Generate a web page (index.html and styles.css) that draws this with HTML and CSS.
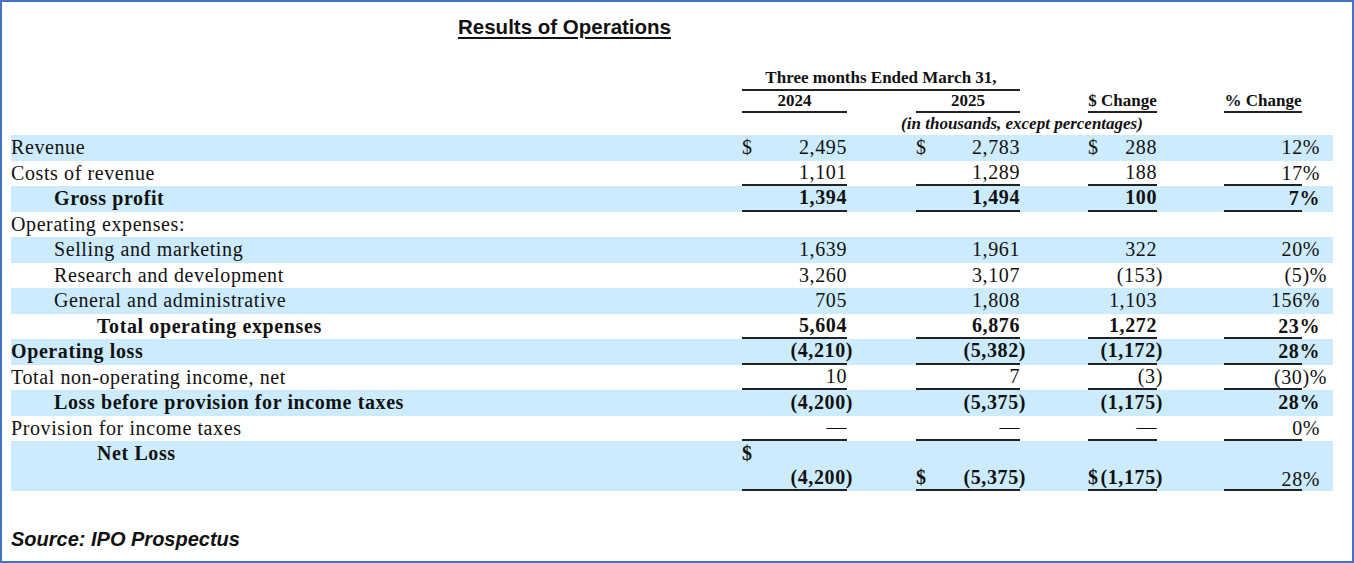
FILE: index.html
```html
<!DOCTYPE html>
<html lang="en">
<head>
<meta charset="utf-8">
<title>Results of Operations</title>
<link rel="stylesheet" href="styles.css">
</head>
<body>
<div class="frame">
  <h1 class="title">Results of Operations</h1>

  <div class="head">
    <div class="grid hrow h1r">
      <div class="span3 ul">Three months Ended March 31,</div>
    </div>
    <div class="grid hrow h2r">
      <div class="c1 ul ctr">2024</div>
      <div class="c2 ul ctr">2025</div>
      <div class="c3 ul ctr">$ Change</div>
      <div class="c4 ul ctr pcth">% Change</div>
    </div>
    <div class="grid hrow h3r">
      <div class="spanall ctr ital">(in thousands, except percentages)</div>
    </div>
  </div>

  <div class="body">
    <div class="grid row blue">
      <div class="lbl">Revenue</div>
      <div class="m c1"><span>$</span><span>2,495</span></div>
      <div class="m c2"><span>$</span><span>2,783</span></div>
      <div class="m c3"><span>$</span><span>288</span></div>
      <div class="pct c4"><span>12%</span></div>
    </div>
    <div class="grid row line">
      <div class="lbl">Costs of revenue</div>
      <div class="m c1"><span></span><span>1,101</span></div>
      <div class="m c2"><span></span><span>1,289</span></div>
      <div class="m c3"><span></span><span>188</span></div>
      <div class="pct c4"><span>17%</span></div>
    </div>
    <div class="grid row blue line bold">
      <div class="lbl i1">Gross profit</div>
      <div class="m c1"><span></span><span>1,394</span></div>
      <div class="m c2"><span></span><span>1,494</span></div>
      <div class="m c3"><span></span><span>100</span></div>
      <div class="pct c4"><span>7%</span></div>
    </div>
    <div class="grid row">
      <div class="lbl">Operating expenses:</div>
    </div>
    <div class="grid row blue">
      <div class="lbl i1">Selling and marketing</div>
      <div class="m c1"><span></span><span>1,639</span></div>
      <div class="m c2"><span></span><span>1,961</span></div>
      <div class="m c3"><span></span><span>322</span></div>
      <div class="pct c4"><span>20%</span></div>
    </div>
    <div class="grid row">
      <div class="lbl i1">Research and development</div>
      <div class="m c1"><span></span><span>3,260</span></div>
      <div class="m c2"><span></span><span>3,107</span></div>
      <div class="m c3"><span></span><span>(153<span class="hang">)</span></span></div>
      <div class="pct c4"><span>(5<span class="hangp">)%</span></span></div>
    </div>
    <div class="grid row blue">
      <div class="lbl i1">General and administrative</div>
      <div class="m c1"><span></span><span>705</span></div>
      <div class="m c2"><span></span><span>1,808</span></div>
      <div class="m c3"><span></span><span>1,103</span></div>
      <div class="pct c4"><span>156%</span></div>
    </div>
    <div class="grid row line bold">
      <div class="lbl i2">Total operating expenses</div>
      <div class="m c1"><span></span><span>5,604</span></div>
      <div class="m c2"><span></span><span>6,876</span></div>
      <div class="m c3"><span></span><span>1,272</span></div>
      <div class="pct c4"><span>23%</span></div>
    </div>
    <div class="grid row blue line bold">
      <div class="lbl">Operating loss</div>
      <div class="m c1"><span></span><span>(4,210<span class="hang">)</span></span></div>
      <div class="m c2"><span></span><span>(5,382<span class="hang">)</span></span></div>
      <div class="m c3"><span></span><span>(1,172<span class="hang">)</span></span></div>
      <div class="pct c4"><span>28%</span></div>
    </div>
    <div class="grid row line">
      <div class="lbl">Total non-operating income, net</div>
      <div class="m c1"><span></span><span>10</span></div>
      <div class="m c2"><span></span><span>7</span></div>
      <div class="m c3"><span></span><span>(3<span class="hang">)</span></span></div>
      <div class="pct c4"><span>(30<span class="hangp">)%</span></span></div>
    </div>
    <div class="grid row blue bold">
      <div class="lbl i1">Loss before provision for income taxes</div>
      <div class="m c1"><span></span><span>(4,200<span class="hang">)</span></span></div>
      <div class="m c2"><span></span><span>(5,375<span class="hang">)</span></span></div>
      <div class="m c3"><span></span><span>(1,175<span class="hang">)</span></span></div>
      <div class="pct c4"><span>28%</span></div>
    </div>
    <div class="grid row line">
      <div class="lbl">Provision for income taxes</div>
      <div class="m c1"><span></span><span>—</span></div>
      <div class="m c2"><span></span><span>—</span></div>
      <div class="m c3"><span></span><span>—</span></div>
      <div class="pct c4"><span>0%</span></div>
    </div>
    <div class="grid row blue line bold tall">
      <div class="lbl i2">Net Loss</div>
      <div class="m c1 two"><span class="top">$</span><span>(4,200<span class="hang">)</span></span></div>
      <div class="m c2"><span>$</span><span>(5,375<span class="hang">)</span></span></div>
      <div class="m c3"><span>$</span><span>(1,175<span class="hang">)</span></span></div>
      <div class="pct c4 reg"><span>28%</span></div>
    </div>
  </div>

  <p class="source">Source: IPO Prospectus</p>
</div>
</body>
</html>
```

FILE: styles.css
```css
* {
  box-sizing: border-box;
}

html,
body {
  margin: 0;
  padding: 0;
  background: #ffffff;
}

.frame {
  width: 1354px;
  height: 563px;
  border: 2px solid #4472c4;
  padding: 13px 0 0 9px;
  font-family: "Liberation Serif", "Times New Roman", serif;
  color: #111111;
  overflow: hidden;
}

.title {
  margin: 0 0 0 447px;
  height: 24px;
  font-family: "Liberation Sans", Arial, sans-serif;
  font-weight: 700;
  font-size: 20.5px;
  line-height: 24px;
  text-decoration: underline;
  text-decoration-thickness: 2px;
  text-underline-offset: 3px;
}

.grid {
  display: grid;
  grid-template-columns: 731px 105px 69px 104px 68px 69px 67px 96px 13px;
  width: 1322px;
}

.head {
  margin-top: 27px;
}

.hrow {
  font-weight: 700;
  font-size: 17px;
  line-height: 20px;
}

.h1r {
  height: 25px;
}

.h2r,
.h3r {
  height: 22px;
}

.hrow > div {
  display: flex;
  align-items: center;
  white-space: nowrap;
}

.span3 {
  grid-column: 2 / 5;
  justify-content: center;
}

.spanall {
  grid-column: 2 / 9;
  padding-right: 18px;
}

.ctr {
  justify-content: center;
}

.ul {
  border-bottom: 2px solid #222222;
}

.pcth {
  width: 78px;
  justify-self: start;
}

.ital {
  font-style: italic;
}

.c1 {
  grid-column: 2;
}

.c2 {
  grid-column: 4;
}

.c3 {
  grid-column: 6;
}

.c4 {
  grid-column: 8;
}

.row {
  height: 25.5px;
  font-size: 20px;
  letter-spacing: 0.6px;
  line-height: 23px;
}

.row.blue {
  background: #ccecfd;
}

.row.bold {
  font-weight: 700;
}

.lbl {
  grid-column: 1;
  display: flex;
  align-items: center;
  white-space: nowrap;
}

.i1 {
  padding-left: 43px;
}

.i2 {
  padding-left: 86px;
}

.m {
  display: flex;
  justify-content: space-between;
  align-items: center;
  white-space: nowrap;
}

.pct {
  display: flex;
  justify-content: flex-end;
  align-items: center;
  white-space: nowrap;
}

.line .m {
  border-bottom: 2px solid #222222;
}

.line .pct {
  background: linear-gradient(#222222, #222222) left bottom / 78px 2px no-repeat;
}

.hang {
  margin-right: -6px;
}

.hangp {
  margin-right: -7px;
}

.row.tall {
  height: 50px;
  line-height: 24px;
}

.tall .lbl {
  align-items: flex-start;
}

.tall .m,
.tall .pct {
  align-items: flex-end;
  padding-bottom: 0;
}

.tall .two {
  flex-direction: column;
  align-items: stretch;
  justify-content: flex-start;
}

.tall .two > span {
  display: block;
  text-align: right;
}

.tall .two > .top {
  text-align: left;
}

.reg {
  font-weight: 400;
}

.source {
  margin: 36px 0 0 0;
  font-family: "Liberation Sans", Arial, sans-serif;
  font-weight: 700;
  font-style: italic;
  font-size: 20px;
  line-height: 24px;
}
```
